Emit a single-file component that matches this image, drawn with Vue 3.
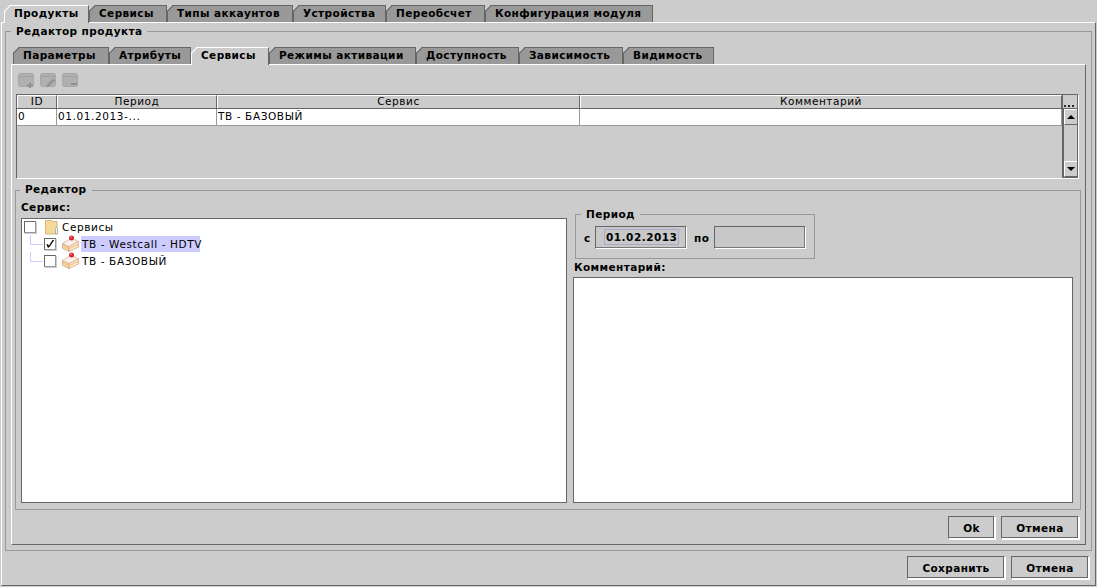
<script setup>
const mainTabs = [
  { label: 'Продукты', w: 85, active: true },
  { label: 'Сервисы', w: 78 },
  { label: 'Типы аккаунтов', w: 126 },
  { label: 'Устройства', w: 93 },
  { label: 'Переобсчет', w: 99 },
  { label: 'Конфигурация модуля', w: 168 }
]
const subTabs = [
  { label: 'Параметры', w: 96 },
  { label: 'Атрибуты', w: 82 },
  { label: 'Сервисы', w: 78, active: true },
  { label: 'Режимы активации', w: 147 },
  { label: 'Доступность', w: 103 },
  { label: 'Зависимость', w: 104 },
  { label: 'Видимость', w: 91 }
]
const cols = [
  { label: 'ID', w: 40 },
  { label: 'Период', w: 160 },
  { label: 'Сервис', w: 363 },
  { label: 'Комментарий', w: 482 }
]
const cells = ['0', '01.01.2013-...', 'ТВ - БАЗОВЫЙ', '']
</script>

<template>
  <div class="root">
    <div class="tabs main-tabs">
      <div v-for="t in mainTabs" :key="t.label" class="tab" :class="{ active: t.active }" :style="{ width: t.w + 'px' }">{{ t.label }}</div>
    </div>
    <div class="outer">
      <div class="group product">
        <div class="legend l-product">Редактор продукта</div>
        <div class="tabs sub-tabs">
          <div v-for="t in subTabs" :key="t.label" class="tab" :class="{ active: t.active }" :style="{ width: t.w + 'px' }">{{ t.label }}</div>
        </div>
        <div class="inner">
          <div class="toolbar">
            <svg width="16" height="15" viewBox="0 0 16 15"><rect x="0.5" y="0.5" width="15" height="13" rx="2" fill="#b0b0b0" stroke="#a6a6a6"/><rect x="1" y="3" width="14" height="1" fill="#a0a0a0"/><path d="M11 9.5h2v2h2v2h-2v1.5h-2V13.500H9v-2h2z" fill="#909090"/></svg>
            <svg width="16" height="15" viewBox="0 0 16 15"><rect x="0.5" y="0.5" width="15" height="13" rx="2" fill="#b0b0b0" stroke="#a6a6a6"/><rect x="1" y="3" width="14" height="1" fill="#a0a0a0"/><path d="M6 14.500l1-3 6-6 2 2-6 6z" fill="#949494"/></svg>
            <svg width="16" height="15" viewBox="0 0 16 15"><rect x="0.5" y="0.5" width="15" height="13" rx="2" fill="#b0b0b0" stroke="#a6a6a6"/><rect x="1" y="3" width="14" height="1" fill="#a0a0a0"/><rect x="9" y="10" width="6" height="2" fill="#909090"/></svg>
          </div>
          <div class="table">
            <div class="table-main">
              <div class="thead">
                <div v-for="c in cols" :key="c.label" class="th" :style="{ width: c.w + 'px' }">{{ c.label }}</div>
              </div>
              <div class="tr">
                <div v-for="(c, i) in cols" :key="c.label" class="td" :style="{ width: c.w + 'px' }">{{ cells[i] }}</div>
              </div>
            </div>
            <div class="side">
              <div class="dots"><i></i><i></i><i></i></div>
              <div class="scroll">
                <div class="sbtn"><svg width="8" height="4" viewBox="0 0 8 4"><path d="M4 0l4 4H0z" fill="#000"/></svg></div>
                <div class="strack"></div>
                <div class="sbtn"><svg width="8" height="4" viewBox="0 0 8 4"><path d="M0 0h8L4 4z" fill="#000"/></svg></div>
              </div>
            </div>
          </div>
          <div class="group editor">
            <div class="legend l-editor">Редактор</div>
            <div class="cols">
              <div class="left">
                <div class="lbl">Сервис:</div>
                <div class="tree">
                  <div class="row root-row">
                    <span class="cb"></span>
                    <svg class="folder" width="15" height="16" viewBox="0 0 15 16"><path d="M1.500 1.500h6l1 1h4.500v12.500H1.500z" fill="#f6d998" stroke="#c9ab6c" stroke-width="0.8"/><path d="M11.500 15V9.500q0-1 1-1t1 1V15z" fill="#fff3cf" stroke="#7f9fc0" stroke-width="0.7"/></svg>
                    <span class="txt t-root">Сервисы</span>
                  </div>
                  <div class="row child line-first">
                    <span class="cb checked"><svg width="11" height="11" viewBox="0 0 11 11"><path d="M1.500 6l2 .5.8 1.500L8.500 1.500l1.500.5L4.500 10H3z" fill="#000"/></svg></span>
                    <svg class="cake" width="17" height="17" viewBox="0 0 17 17"><path d="M0.500 8.500L7 11.500V16.500L0.500 13.500z" fill="#f8d9a6" stroke="#c9a27c" stroke-width="0.7"/><path d="M7 11.500L16.500 6.500V12L7 16.500z" fill="#fdeac8" stroke="#c9a27c" stroke-width="0.7"/><path d="M0.500 8.500L9 3.500L16.500 6.500L7 11.500z" fill="#fff1ea" stroke="#cfa88c" stroke-width="0.7"/><path d="M1 11l6 2.800 9-4.300" fill="none" stroke="#eeb97e" stroke-width="1"/><circle cx="9.500" cy="3" r="2.500" fill="#d42a2e"/><circle cx="9" cy="2.300" r="0.700" fill="#f7b0b0"/></svg>
                    <span class="txt selected">ТВ - Westcall - HDTV</span>
                  </div>
                  <div class="row child line-next">
                    <span class="cb"></span>
                    <svg class="cake" width="17" height="17" viewBox="0 0 17 17"><path d="M0.500 8.500L7 11.500V16.500L0.500 13.500z" fill="#f8d9a6" stroke="#c9a27c" stroke-width="0.7"/><path d="M7 11.500L16.500 6.500V12L7 16.500z" fill="#fdeac8" stroke="#c9a27c" stroke-width="0.7"/><path d="M0.500 8.500L9 3.500L16.500 6.500L7 11.500z" fill="#fff1ea" stroke="#cfa88c" stroke-width="0.7"/><path d="M1 11l6 2.800 9-4.300" fill="none" stroke="#eeb97e" stroke-width="1"/><circle cx="9.500" cy="3" r="2.500" fill="#d42a2e"/><circle cx="9" cy="2.300" r="0.700" fill="#f7b0b0"/></svg>
                    <span class="txt plain">ТВ - БАЗОВЫЙ</span>
                  </div>
                </div>
              </div>
              <div class="right">
                <div class="group period">
                  <div class="legend l-period">Период</div>
                  <span class="plbl">с</span>
                  <div class="field"><span class="focus">01.02.2013</span></div>
                  <span class="plbl po">по</span>
                  <div class="field"></div>
                </div>
                <div class="lbl comment-lbl">Комментарий:</div>
                <div class="area"></div>
              </div>
            </div>
          </div>
          <div class="btns inner-btns">
            <button class="btn ok">Ok</button>
            <button class="btn cancel1">Отмена</button>
          </div>
        </div>
      </div>
      <div class="btns outer-btns">
        <button class="btn save">Сохранить</button>
        <button class="btn cancel2">Отмена</button>
      </div>
    </div>
  </div>
</template>

<style>
html, body { margin: 0; background: #ccc; }
</style>

<style scoped>
.root {
  width: 1097px;
  height: 587px;
  background: #ccc;
  overflow: hidden;
  font-family: "DejaVu Sans", sans-serif;
  font-size: 10.5px;
  color: #000;
  box-sizing: border-box;
}
.tabs { display: flex; height: 17px; box-sizing: border-box; }
.main-tabs { margin: 5px 0 0 4px; }
.sub-tabs { margin: 15px 0 0 2px; }
.tab {
  position: relative;
  box-sizing: border-box;
  height: 17px;
  background: #999;
  border-top: 1px solid #666;
  border-right: 1px solid #666;
  border-left: 1px solid #666;
  font-weight: bold;
  letter-spacing: 0.4px;
  line-height: 15px;
  padding-left: 9px;
  white-space: nowrap;
  clip-path: polygon(6px 0, 100% 0, 100% 100%, 0 100%, 0 6px);
}
.tab::before {
  content: "";
  position: absolute;
  left: -1px;
  top: -1px;
  width: 7px;
  height: 7px;
  background: linear-gradient(135deg, transparent 4.2px, #666 4.2px, #666 5.4px, transparent 5.4px);
}
.tab.active {
  background: #ccc;
  border-top-color: #fff;
  border-left-color: #fff;
  height: 18px;
  z-index: 1;
}
.tab.active::before {
  background: linear-gradient(135deg, transparent 4.2px, #fff 4.2px, #fff 5.4px, transparent 5.4px);
}
.outer {
  position: relative;
  box-sizing: border-box;
  margin-left: 1px;
  width: 1095px;
  height: 564px;
  border-top: 1px solid #fff;
  border-left: 1px solid #fff;
  border-bottom: 1px solid #666;
  border-right: 1px solid #666;
  padding: 8px 0 0 3px;
}
.group {
  position: relative;
  box-sizing: border-box;
  border: 1px solid #999;
}
.legend {
  position: absolute;
  background: #ccc;
  font-weight: bold;
  letter-spacing: 0.4px;
  line-height: 13px;
  padding: 0 5px;
  white-space: nowrap;
}
.product { width: 1087px; height: 520px; padding: 0 0 0 5px; }
.l-product { left: 5px; top: -7px; }
.inner {
  position: relative;
  box-sizing: border-box;
  width: 1075px;
  height: 481px;
  border-top: 1px solid #fff;
  border-left: 1px solid #fff;
  border-right: 1px solid #666;
  border-bottom: 1px solid #666;
  padding: 8px 0 0 3px;
}
.toolbar { display: flex; gap: 6px; height: 21px; padding-left: 3px; }
.table {
  box-sizing: border-box;
  display: flex;
  margin-left: 1px;
  width: 1063px;
  height: 85px;
  border-top: 1px solid #666;
  border-left: 1px solid #666;
  border-right: 1px solid #fff;
  border-bottom: 1px solid #fff;
  position: relative;
}
.table-main { width: 1045px; border-right: 1px solid #666; }
.thead { display: flex; height: 13px; border-bottom: 1px solid #666; }
.th {
  box-sizing: border-box;
  border-right: 1px solid #666;
  border-top: 1px solid #fff;
  border-left: 1px solid #fff;
  text-align: center;
  letter-spacing: 0.55px;
  line-height: 11px;
  overflow: hidden;
}
.tr { display: flex; height: 16px; background: #fff; border-bottom: 1px solid #999; }
.td {
  box-sizing: border-box;
  border-right: 1px solid #999;
  padding-left: 1px;
  letter-spacing: 0.6px;
  line-height: 14px;
  white-space: nowrap;
}
.side { width: 16px; box-sizing: border-box; border-right: 1px solid #666; display: flex; flex-direction: column; border-bottom: 1px solid #666; }
.dots {
  height: 13px;
  display: flex;
  gap: 2px;
  align-items: flex-end;
  padding: 0 0 1px 1px;
  box-sizing: border-box;
}
.dots i { width: 2px; height: 2px; background: #223; }
.dots i:nth-child(1) { background: #422; }
.dots i:nth-child(3) { background: #224; }
.scroll { flex: 1; display: flex; flex-direction: column; border-left: 1px solid #666; border-top: 1px solid #666; }
.sbtn {
  display: flex;
  align-items: center;
  justify-content: center;
  border-top: 1px solid #fff;
  border-left: 1px solid #fff;
  border-bottom: 1px solid #666;
  box-sizing: border-box;
  height: 16px;
}
.strack { flex: 1; }
.editor { margin: 11px 0 0 0; width: 1066px; height: 320px; }
.l-editor { left: 4px; top: -8px; }
.cols { display: flex; padding: 10px 0 0 5px; }
.left { width: 552px; }
.lbl { font-weight: bold; letter-spacing: 0.4px; line-height: 13px; }
.tree {
  box-sizing: border-box;
  margin-top: 4px;
  width: 546px;
  height: 285px;
  background: #fff;
  border: 1px solid #666;
  position: relative;
}
.row { display: flex; align-items: center; height: 17px; position: relative; }
.root-row { padding-left: 2px; margin-top: -1px; }
.child { padding-left: 22px; }
.line-first::before, .line-next::before {
  content: "";
  position: absolute;
  left: 8px;
  top: 0;
  width: 12px;
  height: 9px;
  border-left: 1px solid #ccf;
  border-bottom: 1px solid #ccf;
}
.cb {
  box-sizing: border-box;
  width: 12px;
  height: 12px;
  display: flex;
  align-items: center;
  justify-content: center;
  background: #fff;
  border-top: 1px solid #666;
  border-left: 1px solid #666;
  border-right: 1px solid #999;
  border-bottom: 1px solid #999;
  box-shadow: 1px 1px 0 #ccc;
}
.folder { margin-left: 8px; }
.cake { margin-left: 6px; }
.txt { letter-spacing: 0.6px; line-height: 16px; white-space: nowrap; }
.t-root { margin-left: 3px; }
.selected { background: #ccf; margin-left: 2px; width: 119px; padding-left: 1px; box-sizing: border-box; }
.plain { margin-left: 3px; }
.right { width: 500px; display: flex; flex-direction: column; }
.period {
  width: 240px;
  height: 45px;
  margin: 13px 0 0 2px;
  padding-top: 11px;
  display: flex;
  align-items: flex-start;
  padding-left: 8px;
  box-sizing: border-box;
}
.l-period { left: 5px; top: -7px; }
.plbl { font-weight: bold; line-height: 24px; width: 11px; }
.po { width: 20px; margin-left: 7px; letter-spacing: 0.5px; }
.field {
  box-sizing: border-box;
  width: 92px;
  height: 23px;
  border-top: 1px solid #666;
  border-left: 1px solid #666;
  border-right: 1px solid #fff;
  border-bottom: 1px solid #fff;
  box-shadow: inset -1px -1px 0 #777;
  padding: 2px 0 0 8px;
  background: #c8c8c8;
}
.focus {
  display: inline-block;
  box-sizing: border-box;
  border: 1px solid #aaaad0;
  font-weight: bold;
  letter-spacing: 0.5px;
  line-height: 14px;
  height: 16px;
  padding: 0 1px;
  white-space: nowrap;
}
.comment-lbl { margin: 2px 0 0 1px; }
.area {
  box-sizing: border-box;
  margin-top: 3px;
  width: 500px;
  height: 226px;
  background: #fff;
  border: 1px solid #666;
}
.btns { display: flex; justify-content: flex-end; gap: 6px; }
.inner-btns { width: 1064px; margin-top: 6px; }
.outer-btns { width: 1084px; margin-top: 5px; }
.btn {
  box-sizing: border-box;
  height: 23px;
  background: #ccc;
  border-top: 1px solid #666;
  border-left: 1px solid #666;
  border-right: 1px solid #fff;
  border-bottom: 1px solid #fff;
  box-shadow: inset -1px -1px 0 #666, 1px 1px 0 #fff;
  font-family: inherit;
  font-size: 10.5px;
  font-weight: bold;
  letter-spacing: 0.4px;
  color: #000;
  padding: 0;
}
.ok { width: 47px; }
.cancel1 { width: 78px; }
.save { width: 98px; }
.cancel2 { width: 78px; }
</style>
